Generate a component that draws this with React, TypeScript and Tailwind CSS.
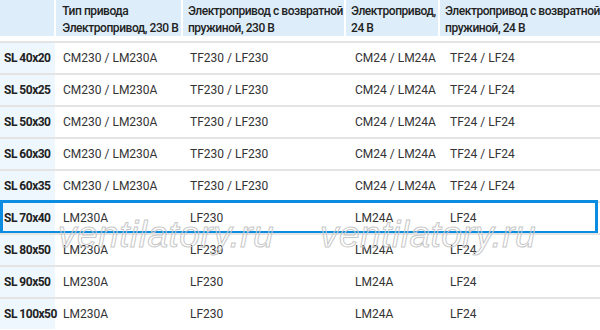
const rows = [
  { size: "SL 40x20", a: "CM230 / LM230A", b: "TF230 / LF230", c: "CM24 / LM24A", d: "TF24 / LF24" },
  { size: "SL 50x25", a: "CM230 / LM230A", b: "TF230 / LF230", c: "CM24 / LM24A", d: "TF24 / LF24" },
  { size: "SL 50x30", a: "CM230 / LM230A", b: "TF230 / LF230", c: "CM24 / LM24A", d: "TF24 / LF24" },
  { size: "SL 60x30", a: "CM230 / LM230A", b: "TF230 / LF230", c: "CM24 / LM24A", d: "TF24 / LF24" },
  { size: "SL 60x35", a: "CM230 / LM230A", b: "TF230 / LF230", c: "CM24 / LM24A", d: "TF24 / LF24" },
  { size: "SL 70x40", a: "LM230A", b: "LF230", c: "LM24A", d: "LF24", active: true },
  { size: "SL 80x50", a: "LM230A", b: "LF230", c: "LM24A", d: "LF24" },
  { size: "SL 90x50", a: "LM230A", b: "LF230", c: "LM24A", d: "LF24" },
  { size: "SL 100x50", a: "LM230A", b: "LF230", c: "LM24A", d: "LF24" },
];

export default function App() {
  return (
    <div className="relative w-[600px] h-[330px] overflow-hidden bg-white text-[12px] text-[#333] font-['Roboto',sans-serif]">
      {/* header */}
      <div className="flex h-[36px] font-medium text-[#222] leading-[17px] whitespace-nowrap tracking-[-0.45px]">
        <div className="w-[55px] bg-[#ddeefa]" />
        <div className="w-[128px] bg-[#ddeefa] border-l-2 border-white pl-[6px] pt-[3px]">
          <div>Тип привода</div>
          <div>Электропривод, 230 В</div>
        </div>
        <div className="w-[165px] bg-[#ddeefa] border-l-2 border-white pl-[5px] pt-[3px]">
          <div>Электропривод с возвратной</div>
          <div>пружиной, 230 В</div>
        </div>
        <div className="w-[95px] bg-[#ddeefa] border-l-2 border-white pl-[5px] pt-[3px]">
          <div>Электропривод,</div>
          <div>24 В</div>
        </div>
        <div className="flex-1 bg-[#ddeefa] border-l-2 border-white pl-[5px] pt-[3px]">
          <div>Электропривод с возвратной</div>
          <div>пружиной, 24 В</div>
        </div>
      </div>
      <div className="h-[5px]" />

      {/* body */}
      {rows.map((r) => (
        <div key={r.size} className="relative flex h-[32px] border-t-2 border-[#e4e4e4] items-center">
          <div className="w-[55px] h-full flex items-center pl-[4px] bg-[#eef7fd] font-bold text-[#222] whitespace-nowrap tracking-[-0.5px]">
            {r.size}
          </div>
          <div className="w-[128px] pl-[8px]">{r.a}</div>
          <div className="w-[165px] pl-[7px]">{r.b}</div>
          <div className="w-[95px] pl-[7px]">{r.c}</div>
          <div className="flex-1 pl-[7px]">{r.d}</div>
          {r.active && (
            <div className="absolute left-0 right-[2px] top-[-3px] bottom-[-1px] border-[3px] border-[#0a8ce0]" />
          )}
        </div>
      ))}

      {/* watermark */}
      <div className="absolute left-[58px] top-[207px] text-[37px] italic text-transparent [-webkit-text-stroke:1px_#c8c8c8] font-['Liberation_Sans',sans-serif] tracking-[0.5px] pointer-events-none">
        ventilatory.ru
      </div>
      <div className="absolute left-[320px] top-[207px] text-[37px] italic text-transparent [-webkit-text-stroke:1px_#c8c8c8] font-['Liberation_Sans',sans-serif] tracking-[0.5px] pointer-events-none">
        ventilatory.ru
      </div>
    </div>
  );
}
